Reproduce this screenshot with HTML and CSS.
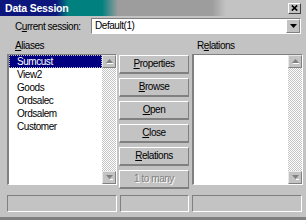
FILE: index.html
```html
<!DOCTYPE html>
<html>
<head>
<meta charset="utf-8">
<title>Data Session</title>
<link rel="stylesheet" href="styles.css">
</head>
<body>
<div class="window">
  <div class="titlebar">
    <span class="title">Data Session</span>
    <span class="close"><svg width="7" height="6" viewBox="0 0 7 6"><path d="M0.8 0.5L6.2 5.5M6.2 0.5L0.8 5.5" stroke="#000" stroke-width="1.7"/></svg></span>
  </div>
  <div class="session">
    <span class="session-label">C<u>u</u>rrent session:</span>
    <div class="combo">
      <span class="combo-text">Default(1)</span>
      <span class="combo-btn"><svg width="7" height="4" viewBox="0 0 7 4"><path d="M0 0h7L3.5 4z" fill="#000"/></svg></span>
    </div>
  </div>
  <div class="labels">
    <span class="lbl-aliases"><u>A</u>liases</span>
    <span class="lbl-rel">R<u>e</u>lations</span>
  </div>
  <div class="main">
    <div class="listbox alias">
      <ul class="items">
        <li class="sel">Sumcust</li>
        <li>View2</li>
        <li>Goods</li>
        <li>Ordsalec</li>
        <li>Ordsalem</li>
        <li>Customer</li>
      </ul>
      <div class="vscroll">
        <div class="sbtn"><svg width="7" height="5" viewBox="0 0 7 5"><path d="M3.5 0L7 4H0z" fill="#808080"/><path d="M1 4.5h6" stroke="#fff" stroke-width="1"/></svg></div>
        <div class="track"></div>
        <div class="sbtn"><svg width="7" height="5" viewBox="0 0 7 5"><path d="M0 0h7L3.5 4z" fill="#808080"/><path d="M4 4.5h3" stroke="#fff" stroke-width="1"/></svg></div>
      </div>
    </div>
    <div class="buttons">
      <div class="btn"><u>P</u>roperties</div>
      <div class="btn"><u>B</u>rowse</div>
      <div class="btn"><u>O</u>pen</div>
      <div class="btn"><u>C</u>lose</div>
      <div class="btn"><u>R</u>elations</div>
      <div class="btn disabled">1 to many</div>
    </div>
    <div class="listbox rel">
      <ul class="items"></ul>
      <div class="vscroll">
        <div class="sbtn"><svg width="7" height="5" viewBox="0 0 7 5"><path d="M3.5 0L7 4H0z" fill="#808080"/><path d="M1 4.5h6" stroke="#fff" stroke-width="1"/></svg></div>
        <div class="track"></div>
        <div class="sbtn"><svg width="7" height="5" viewBox="0 0 7 5"><path d="M0 0h7L3.5 4z" fill="#808080"/><path d="M4 4.5h3" stroke="#fff" stroke-width="1"/></svg></div>
      </div>
    </div>
  </div>
  <div class="status">
    <div class="pane p1"></div>
    <div class="pane p2"></div>
    <div class="pane p3"></div>
  </div>
  <div class="bottom-line"></div>
</div>
</body>
</html>
```
FILE: styles.css
```css
* { box-sizing: border-box; }
body {
  margin: 0;
  background: #c3c3c3;
  font-family: "Liberation Sans", Arial, sans-serif;
  font-size: 10px;
  letter-spacing: -0.45px;
  color: #000;
}
.window {
  width: 306px;
  height: 220px;
  display: flex;
  flex-direction: column;
  background: #c3c3c3;
}
.titlebar {
  height: 16px;
  display: flex;
  align-items: center;
  background: linear-gradient(90deg, #0c167c 0px, #0c167c 56px, #00807f 68px, #00807f 102px, #9d9d9d 118px, #9d9d9d 212px, #c3c3c3 226px);
}
.title {
  padding-left: 5px;
  color: #fff;
  font-weight: bold;
  font-size: 10.5px;
  letter-spacing: -0.2px;
}
.close {
  margin-left: auto;
  margin-right: 5px;
  width: 13px;
  height: 11px;
  background: #c3c3c3;
  border-top: 1px solid #fff;
  border-left: 1px solid #fff;
  border-right: 1px solid #404040;
  border-bottom: 1px solid #404040;
  display: flex;
  align-items: center;
  justify-content: center;
}
.session {
  display: flex;
  align-items: center;
  margin-top: 2px;
  height: 16px;
  padding-left: 15px;
}
.session-label { width: 76px; }
.combo {
  width: 210px;
  height: 16px;
  display: flex;
  background: #fff;
  border-top: 1px solid #808080;
  border-left: 1px solid #808080;
  border-right: 1px solid #fff;
  border-bottom: 1px solid #fff;
}
.combo-text {
  flex: 1;
  padding-left: 3px;
  line-height: 14px;
}
.combo-btn {
  width: 14px;
  height: 14px;
  background: #c3c3c3;
  border-top: 1px solid #fff;
  border-left: 1px solid #fff;
  border-right: 1px solid #808080;
  border-bottom: 1px solid #808080;
  display: flex;
  align-items: center;
  justify-content: center;
}
.labels {
  display: flex;
  height: 20px;
  padding-top: 6px;
  line-height: 11px;
}
.lbl-aliases { padding-left: 15px; width: 197px; }
.main {
  display: flex;
  height: 131px;
}
.listbox {
  display: flex;
  background: #fff;
  border-top: 1px solid #808080;
  border-left: 2px solid #808080;
  border-right: 1px solid #fff;
  border-bottom: 1px solid #fff;
}
.alias { margin-left: 7px; width: 110px; }
.rel { margin-left: 3px; width: 111px; }
.items {
  flex: 1;
  list-style: none;
  margin: 0;
  padding: 0;
}
.items li {
  height: 13px;
  line-height: 13px;
  padding-left: 8px;
}
.items li.sel {
  background: #000080;
  color: #fff;
  outline: 1px dotted #c0c0c0;
  outline-offset: -1px;
}
.vscroll {
  width: 14px;
  display: flex;
  flex-direction: column;
}
.sbtn {
  height: 13px;
  background: #c3c3c3;
  border-top: 1px solid #e8e8e8;
  border-left: 1px solid #e8e8e8;
  border-right: 1px solid #808080;
  border-bottom: 1px solid #808080;
  display: flex;
  align-items: center;
  justify-content: center;
}
.track {
  flex: 1;
  background: repeating-conic-gradient(#fff 0 25%, #c3c3c3 0 50%) 0 0 / 2px 2px;
}
.buttons {
  margin-left: 2px;
  width: 70px;
  display: flex;
  flex-direction: column;
  gap: 4px;
  padding-top: 1px;
}
.btn {
  height: 19px;
  background: #c3c3c3;
  border-top: 1px solid #fff;
  border-left: 1px solid #fff;
  border-right: 1px solid #808080;
  border-bottom: 2px solid #808080;
  text-align: center;
  line-height: 16px;
}
.btn.disabled {
  color: #808080;
  text-shadow: 1px 1px 0 #fff;
}
.status {
  display: flex;
  margin-top: 10px;
  height: 17px;
}
.pane {
  border-top: 1px solid #808080;
  border-left: 1px solid #808080;
  border-right: 1px solid #fff;
  border-bottom: 1px solid #fff;
}
.p1 { margin-left: 7px; width: 110px; }
.p2 { margin-left: 3px; width: 69px; }
.p3 { margin-left: 3px; width: 110px; }
.bottom-line {
  margin-top: auto;
  height: 3px;
  background: #808080;
}
```
